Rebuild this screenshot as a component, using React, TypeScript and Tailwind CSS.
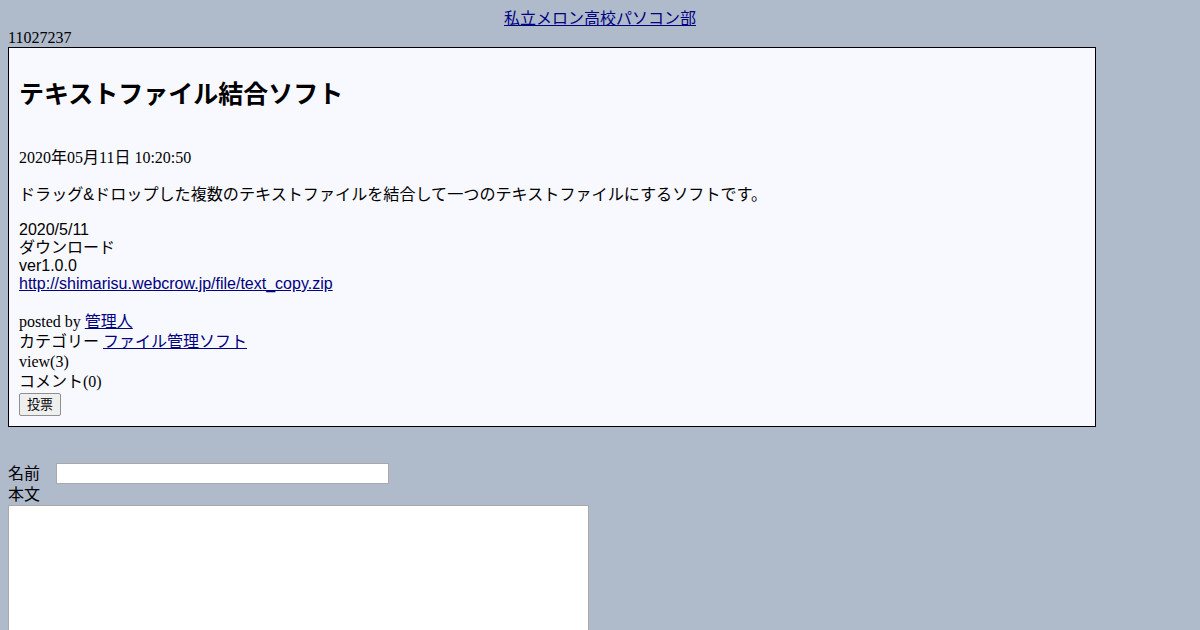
const serif = "font-['Liberation_Serif','Noto_Sans_CJK_JP',serif]";
const sans = "font-['Liberation_Sans','Noto_Sans_CJK_JP',sans-serif]";

export default function App() {
  return (
    <div className={`min-h-screen bg-[#afbacb] p-2 text-black text-[16px] ${serif}`}>
      <div className="text-center leading-[21px]">
        <a href="#" className="text-[#000080] underline">私立メロン高校パソコン部</a>
      </div>
      <div className="leading-[18px]">11027237</div>

      <div className="w-[1088px] h-[380px] border border-black bg-[#f8f8ff] px-[10px] pt-[10px]">
        <h2 className={`mt-[22px] text-[25px] font-bold leading-[28px] ${sans}`}>テキストファイル結合ソフト</h2>
        <div className="mt-[41px] leading-[18px]">2020年05月11日 10:20:50</div>
        <p className={`mt-[18px] leading-[18px] text-[16.1px] ${sans}`}>ドラッグ&amp;ドロップした複数のテキストファイルを結合して一つのテキストファイルにするソフトです。</p>
        <div className={`mt-[18px] flex flex-col leading-[18px] ${sans}`}>
          <span>2020/5/11</span>
          <span>ダウンロード</span>
          <span>ver1.0.0</span>
          <a href="#" className="text-[#000080] underline self-start">http://shimarisu.webcrow.jp/file/text_copy.zip</a>
        </div>
        <div className="mt-[18px] flex flex-col">
          <span className="leading-[21px]">posted by <a href="#" className="text-[#000080] underline">管理人</a></span>
          <span className="leading-[20px]">カテゴリー <a href="#" className="text-[#000080] underline">ファイル管理ソフト</a></span>
          <span className="leading-[20px]">view(3)</span>
          <span className="leading-[19px]">コメント(0)</span>
        </div>
        <button className={`mt-[2px] h-[23px] px-[7px] bg-[#efefef] border border-[#8f8f8f] rounded-[2px] text-[13px] ${sans}`}>投票</button>
      </div>

      <div className={`mt-[36px] flex items-center ${sans}`}>
        <span className="leading-[21px]">名前</span>
        <input type="text" className="ml-[16px] w-[333px] h-[21px] bg-white border border-[#a9a9a9]" />
      </div>
      <div className={`leading-[21px] ${sans}`}>本文</div>
      <textarea className="block w-[581px] h-[200px] bg-white border border-[#a9a9a9]" />
    </div>
  );
}
